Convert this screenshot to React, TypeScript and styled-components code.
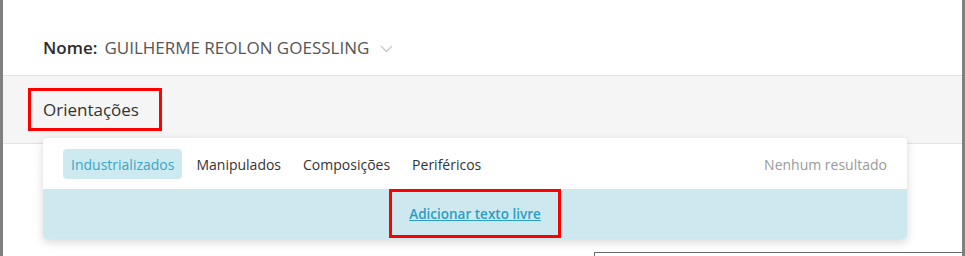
import styled, { createGlobalStyle } from "styled-components";

const GlobalStyle = createGlobalStyle`
  html, body {
    margin: 0;
    padding: 0;
    background: #ffffff;
    font-family: "Open Sans", "Noto Sans", sans-serif;
  }
`

const Frame = styled.div`
  position: relative;
  height: 256px;
  overflow: hidden;
  border-left: 3px solid #808080;
  border-right: 3px solid #808080;
  box-sizing: border-box;
  background: #fff;
`

const Header = styled.header`
  height: 76px;
  display: flex;
  align-items: center;
  padding: 20px 0 0 40px;
  box-sizing: border-box;
  border-bottom: 1px solid #e2e2e2;
  font-size: 17px;
  color: #555;
`

const Label = styled.span`
  font-weight: 600;
  color: #2b2b2b;
  margin-right: 7px;
`

const Chevron = styled.svg`
  margin-left: 11px;
  margin-top: 2px;
`

const Section = styled.section`
  height: 68px;
  background: #f5f5f5;
  border-bottom: 1px solid #e4e4e4;
  box-sizing: border-box;
  padding: 12px 0 0 25px;
`

const Highlight = styled.div`
  display: inline-flex;
  align-items: center;
  border: 3px solid #ff0000;
  box-sizing: border-box;
`

const SectionTitle = styled(Highlight)`
  width: 134px;
  height: 43px;
  padding: 0 12px;
  font-size: 17px;
  color: #333;
`

const Dropdown = styled.div`
  position: absolute;
  top: 138px;
  left: 40px;
  width: 864px;
  background: #fff;
  border-radius: 4px;
  box-shadow: 0 3px 10px rgba(0, 0, 0, 0.16);
`

const TabRow = styled.div`
  display: flex;
  align-items: center;
  gap: 6px;
  padding: 11px 20px 10px 20px;
`

const Tab = styled.span<{ $active?: boolean }>`
  height: 30px;
  display: inline-flex;
  align-items: center;
  padding: 0 8px;
  border-radius: 4px;
  font-size: 14px;
  color: ${p => (p.$active ? "#3aa6c6" : "#333")};
  background: ${p => (p.$active ? "#cdeaf1" : "transparent")};
`

const Empty = styled.span`
  margin-left: auto;
  font-size: 14px;
  color: #9a9a9a;
`

const AddRow = styled.div`
  height: 50px;
  background: #cde9ef;
  border-radius: 0 0 4px 4px;
  display: flex;
  justify-content: center;
`

const AddBox = styled(Highlight)`
  width: 172px;
  height: 49px;
  justify-content: center;
  margin-left: 0;
`

const AddLink = styled.a`
  font-size: 13.5px;
  font-weight: 600;
  color: #2a9ec4;
  text-decoration: underline;
  cursor: pointer;
`

const Body = styled.div`
  padding: 108px 0 0 591px;
`

const Box = styled.div`
  height: 20px;
  border-top: 1px solid #6a6a6a;
  border-left: 1px solid #6a6a6a;
`

const tabs = ["Industrializados", "Manipulados", "Composições", "Periféricos"];

export default function App() {
  return (
    <>
      <GlobalStyle />
      <Frame>
        <Header>
          <Label>Nome:</Label>
          GUILHERME REOLON GOESSLING
          <Chevron width="13" height="8" viewBox="0 0 13 8">
            <path d="M1 1l5.5 5.5L12 1" fill="none" stroke="#c8c8c8" strokeWidth="1.3" />
          </Chevron>
        </Header>
        <Section>
          <SectionTitle>Orientações</SectionTitle>
        </Section>
        <Body>
          <Box />
        </Body>
        <Dropdown>
          <TabRow>
            {tabs.map((t, i) => (
              <Tab key={t} $active={i === 0}>{t}</Tab>
            ))}
            <Empty>Nenhum resultado</Empty>
          </TabRow>
          <AddRow>
            <AddBox>
              <AddLink>Adicionar texto livre</AddLink>
            </AddBox>
          </AddRow>
        </Dropdown>
      </Frame>
    </>
  );
}
